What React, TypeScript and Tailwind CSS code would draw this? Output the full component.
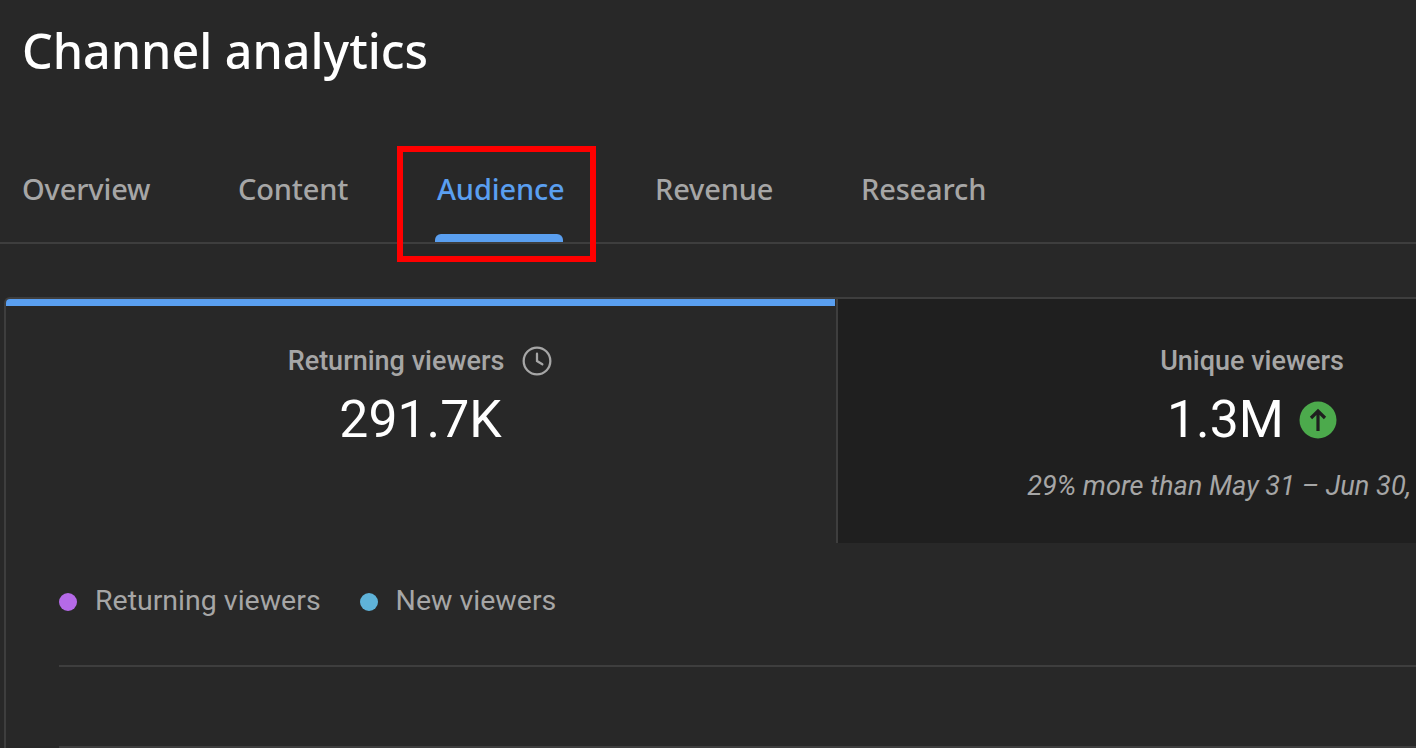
import React from "react";

const roboto = "font-['Roboto',sans-serif]";

function Tab({ label, active, className }: { label: string; active?: boolean; className: string }) {
  return (
    <div className={`relative flex h-[96px] items-start pt-[23px] ${className}`}>
      <span className={`text-[29px] leading-[40px] font-medium tracking-[-0.15px] ${active ? "text-[#5a9ff0]" : "text-[#a6a6a6]"}`}>{label}</span>
      {active && <div className="absolute bottom-0 left-[-2px] h-[8px] w-[128px] rounded-t-[6px] bg-[#5a9ff0]" />}
    </div>
  );
}

export default function App() {
  return (
    <div className="relative h-[748px] w-[1416px] overflow-hidden bg-[#282828] font-['Noto_Sans',sans-serif] antialiased">
      <h1 className="pl-[22px] pt-[17px] text-[48.4px] leading-[66px] font-medium text-white">Channel analytics</h1>
      <div className="mt-[63px] flex h-[98px] border-b-2 border-[#3e3e3e] pl-[22px]">
        <Tab label="Overview" className="w-[216px]" />
        <Tab label="Content" className="w-[199px]" />
        <Tab label="Audience" active className="w-[218px]" />
        <Tab label="Revenue" className="w-[206px]" />
        <Tab label="Research" className="w-[150px]" />
      </div>
      <div className={`mt-[53px] ml-[4px] h-[461px] rounded-tl-[6px] border-t-2 border-l-2 border-[#3e3e3e] ${roboto}`}>
        <div className="flex h-[244px]">
          <div className="flex w-[829px] shrink-0 flex-col items-center rounded-tl-[4px] border-t-[7px] border-[#5a9ff0] pt-[38px]">
            <div className="flex items-center gap-[17px] text-[27px] leading-[34px] font-medium text-[#a6a6a6]">
              Returning viewers
              <svg width="32" height="32" viewBox="0 0 24 24" fill="none" stroke="#a6a6a6" strokeWidth="1.7" strokeLinecap="round">
                <circle cx="12" cy="12" r="10" />
                <path d="M12 6.5V12l4 2.5" />
              </svg>
            </div>
            <div className="mt-[10px] text-[51.7px] leading-[64px] text-white">291.7K</div>
          </div>
          <div className="ml-[1px] flex w-[830px] shrink-0 flex-col items-center border-l-2 border-[#3e3e3e] bg-[#1f1f1f] pt-[45px]">
            <div className="text-[27px] leading-[34px] font-medium text-[#a6a6a6]">Unique viewers</div>
            <div className="mt-[10px] flex items-center gap-[15px] text-[51.7px] leading-[64px] text-white">
              1.3M
              <svg width="38" height="38" viewBox="0 0 38 38">
                <circle cx="19" cy="19" r="18.5" fill="#4caa4c" />
                <path d="M19 30V10M12 17l7-7 7 7" fill="none" stroke="#1f1f1f" strokeWidth="3.2" />
              </svg>
            </div>
            <div className="mt-[16px] text-[27.2px] leading-[36px] whitespace-nowrap text-[#a6a6a6] italic">29% more than May 31 – Jun 30, 2023</div>
          </div>
        </div>
        <div className="pl-[53px]">
          <div className="flex h-[124px] items-center gap-[17px] border-b-2 border-[#3e3e3e] pb-[5px] text-[28.5px] text-[#a6a6a6]">
            <div className="flex items-center gap-[18px]"><span className="h-[18px] w-[18px] rounded-full bg-[#b56ae8]" />Returning viewers</div>
            <div className="ml-[22px] flex items-center gap-[18px]"><span className="h-[18px] w-[18px] rounded-full bg-[#5fb3d9]" />New viewers</div>
          </div>
          <div className="mt-[79px] border-t-2 border-[#3e3e3e]" />
        </div>
      </div>
      <div className="absolute left-[397px] top-[146px] h-[116px] w-[199px] border-[6px] border-[#ff0000]" />
    </div>
  );
}
